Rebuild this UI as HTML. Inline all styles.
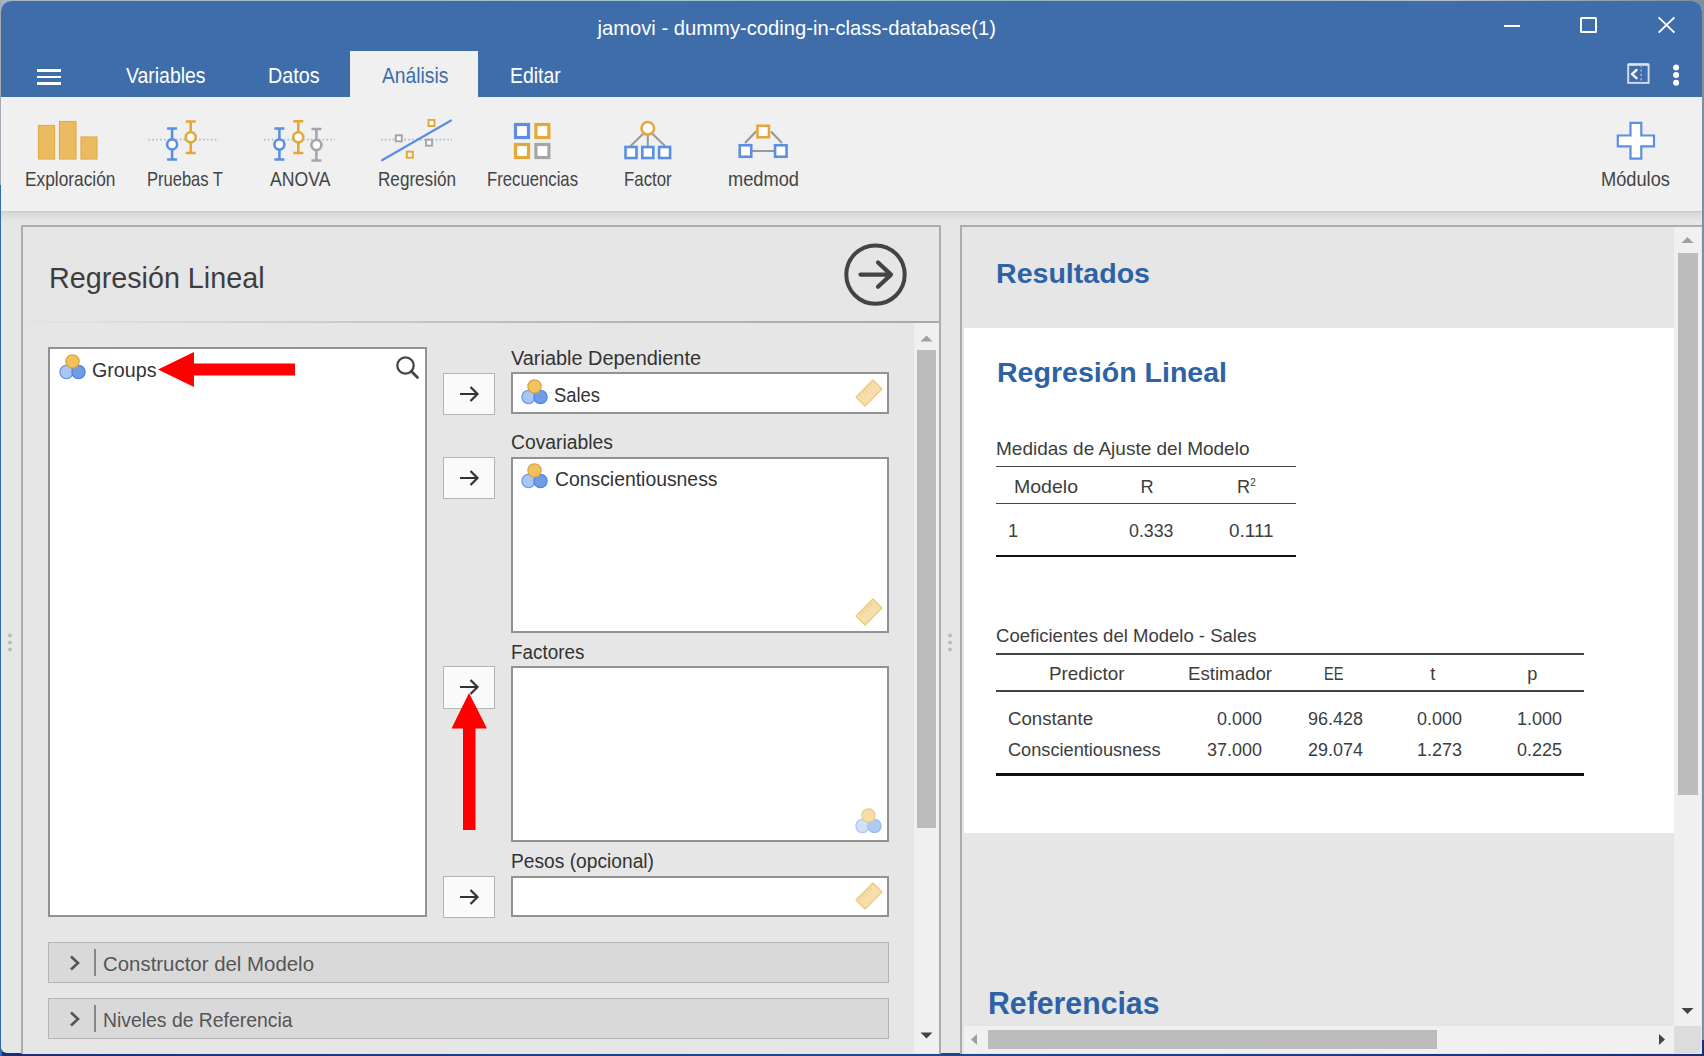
<!DOCTYPE html>
<html><head><meta charset="utf-8">
<style>
*{margin:0;padding:0;box-sizing:border-box}
html,body{width:1704px;height:1056px;overflow:hidden;background:#1d3b8a}
body{position:relative;font-family:"Liberation Sans",sans-serif;color:#333}
.a{position:absolute}
.t{position:absolute;white-space:nowrap;line-height:1}
svg{overflow:visible}
</style></head><body>
<div class="a" style="left:0px;top:0px;width:1704px;height:1056px;background:linear-gradient(90deg,#aab4be,#9cc8cc 40%,#8fb8c0 60%,#b4bec8 85%,#7e8e9e);"></div>
<div class="a" style="left:0px;top:1040px;width:1704px;height:16px;background:linear-gradient(90deg,#1a2d78,#22489a 50%,#1a2d78);"></div>
<div class="a" style="left:0px;top:0px;width:1.5px;height:185px;background:#a3acb5;"></div>
<div class="a" style="left:0px;top:185px;width:1.5px;height:871px;background:#2f6db0;"></div>
<div class="a" style="left:1px;top:1px;width:1701px;height:1052px;background:#e6e6e6;border-radius:10px 10px 6px 6px;overflow:hidden"></div>
<div class="a" style="left:1px;top:1px;width:1701px;height:95.5px;background:#3e6daa;border-radius:10px 10px 0 0"></div>
<div class="t" style="left:597.5px;top:18.40px;font-size:20.2px;color:#fff;letter-spacing:0.005px;">jamovi - dummy-coding-in-class-database(1)</div>
<div class="a" style="left:1503.5px;top:24.5px;width:16.5px;height:2px;background:#fff;"></div>
<div class="a" style="left:1580.2px;top:16.8px;width:16.4px;height:16.2px;background:transparent;border:2px solid #fff;border-radius:1.5px"></div>
<svg class="a" style="left:1656px;top:15px" width="22" height="22"><path d="M2.6 2.4L18.4 17.6M18.4 2.4L2.6 17.6" stroke="#fff" stroke-width="2"/></svg>
<div class="a" style="left:37px;top:69px;width:24px;height:2.5px;background:#fff;"></div>
<div class="a" style="left:37px;top:75.5px;width:24px;height:2.5px;background:#fff;"></div>
<div class="a" style="left:37px;top:82px;width:24px;height:2.5px;background:#fff;"></div>
<div class="t" style="left:126.3px;top:65.80px;font-size:21.5px;color:#fff;transform:scaleX(0.9030);transform-origin:0 0;">Variables</div>
<div class="t" style="left:268.3px;top:65.80px;font-size:21.5px;color:#fff;transform:scaleX(0.9169);transform-origin:0 0;">Datos</div>
<div class="a" style="left:350px;top:51px;width:128px;height:47px;background:#f0f0f0;"></div>
<div class="t" style="left:381.8px;top:65.80px;font-size:21.5px;color:#3e6daa;transform:scaleX(0.8963);transform-origin:0 0;">Análisis</div>
<div class="t" style="left:510.2px;top:65.80px;font-size:21.5px;color:#fff;transform:scaleX(0.9027);transform-origin:0 0;">Editar</div>
<div class="a" style="left:1px;top:96.5px;width:1701px;height:114.5px;background:#f0f0f0;"></div>
<div class="a" style="left:1px;top:210.5px;width:1701px;height:10px;background:linear-gradient(#c9c9c9,#d9d9d9 20%,#e6e6e6);"></div>
<svg class="a" style="left:0;top:0" width="1704" height="220"><rect x="38.5" y="125.5" width="16" height="33.5" fill="#ebbb62" stroke="#e3ac48" stroke-width="1.2"/><rect x="59.5" y="121.5" width="16.5" height="37.5" fill="#ebbb62" stroke="#e3ac48" stroke-width="1.2"/><rect x="81" y="137" width="16" height="22" fill="#ebbb62" stroke="#e3ac48" stroke-width="1.2"/><path d="M148.5 139.6H219" stroke="#a9b9d0" stroke-width="1.6" stroke-dasharray="1.6 2.3"/><path d="M167.1 128.5H177.1M172.1 128.5V159.5M167.1 159.5H177.1" stroke="#5b8fe3" stroke-width="2.6" fill="none"/><circle cx="172.1" cy="144.4" r="5" fill="#fff" stroke="#5b8fe3" stroke-width="2.6"/><path d="M185.7 121.5H195.7M190.7 121.5V153M185.7 153H195.7" stroke="#e6a73a" stroke-width="2.6" fill="none"/><circle cx="190.7" cy="137.3" r="5" fill="#fff" stroke="#e6a73a" stroke-width="2.6"/><path d="M264 139.6H335" stroke="#a9b9d0" stroke-width="1.6" stroke-dasharray="1.6 2.3"/><path d="M274.4 128.5H284.4M279.4 128.5V159.5M274.4 159.5H284.4" stroke="#5b8fe3" stroke-width="2.6" fill="none"/><circle cx="279.4" cy="144.5" r="5" fill="#fff" stroke="#5b8fe3" stroke-width="2.6"/><path d="M293.3 121.3H303.3M298.3 121.3V153M293.3 153H303.3" stroke="#e6a73a" stroke-width="2.6" fill="none"/><circle cx="298.3" cy="137.3" r="5" fill="#fff" stroke="#e6a73a" stroke-width="2.6"/><path d="M311.4 129H321.4M316.4 129V160.5M311.4 160.5H321.4" stroke="#a6a6a6" stroke-width="2.6" fill="none"/><circle cx="316.4" cy="145" r="5" fill="#fff" stroke="#a6a6a6" stroke-width="2.6"/><path d="M381 139.6H452" stroke="#a9b9d0" stroke-width="1.6" stroke-dasharray="1.6 2.3"/><path d="M382 160.3L451 120.5" stroke="#5b8fe3" stroke-width="2.2" stroke-linecap="round"/><rect x="395.8" y="135.3" width="6" height="6" fill="#fff" stroke="#a6a6a6" stroke-width="2"/><rect x="428.5" y="120.0" width="6" height="6" fill="#fff" stroke="#e6a73a" stroke-width="2"/><rect x="406.8" y="151.7" width="6" height="6" fill="#fff" stroke="#e6a73a" stroke-width="2"/><rect x="426.1" y="139.7" width="6" height="6" fill="#fff" stroke="#a6a6a6" stroke-width="2"/><rect x="515.5" y="124.5" width="13" height="13" fill="#fff" stroke="#5b8fe3" stroke-width="3.2"/><rect x="535.9" y="124.5" width="13" height="13" fill="#fff" stroke="#e6a73a" stroke-width="3.2"/><rect x="515.5" y="144.5" width="13" height="13" fill="#fff" stroke="#e6a73a" stroke-width="3.2"/><rect x="535.9" y="144.5" width="13" height="13" fill="#fff" stroke="#a6a6a6" stroke-width="3.2"/><path d="M630.5 146L644.5 132.5M647.8 130V146M651 132.5L665 146" stroke="#999" stroke-width="2"/><circle cx="647.8" cy="128.3" r="6.3" fill="#fff" stroke="#e6a73a" stroke-width="2.6"/><rect x="625.5" y="147.0" width="11" height="11" fill="#fff" stroke="#5b8fe3" stroke-width="2.6"/><rect x="642.3" y="147.0" width="11" height="11" fill="#fff" stroke="#5b8fe3" stroke-width="2.6"/><rect x="659.1" y="147.0" width="11" height="11" fill="#fff" stroke="#5b8fe3" stroke-width="2.6"/><path d="M745 143L756 131.5M771 131.5L782 143M745 151H782" stroke="#999" stroke-width="2.2"/><rect x="757.45" y="125.75" width="11.5" height="11.5" fill="#fff" stroke="#e6a73a" stroke-width="2.6"/><rect x="739.75" y="145.25" width="11.5" height="11.5" fill="#fff" stroke="#5b8fe3" stroke-width="2.6"/><rect x="775.05" y="145.25" width="11.5" height="11.5" fill="#fff" stroke="#5b8fe3" stroke-width="2.6"/><path d="M1630.5 122.8H1641.3V135.5H1654V146.3H1641.3V158.6H1630.5V146.3H1617.8V135.5H1630.5Z" fill="#fff" stroke="#5b8fe3" stroke-width="2.2"/></svg>
<div class="t" style="left:24.5px;top:169.74px;font-size:19.8px;color:#444;transform:scaleX(0.8746);transform-origin:0 0;">Exploración</div>
<div class="t" style="left:147px;top:169.74px;font-size:19.8px;color:#444;transform:scaleX(0.8350);transform-origin:0 0;">Pruebas T</div>
<div class="t" style="left:270px;top:169.74px;font-size:19.8px;color:#444;transform:scaleX(0.8911);transform-origin:0 0;">ANOVA</div>
<div class="t" style="left:377.5px;top:169.74px;font-size:19.8px;color:#444;transform:scaleX(0.8651);transform-origin:0 0;">Regresión</div>
<div class="t" style="left:486.5px;top:169.74px;font-size:19.8px;color:#444;transform:scaleX(0.8446);transform-origin:0 0;">Frecuencias</div>
<div class="t" style="left:624px;top:169.74px;font-size:19.8px;color:#444;transform:scaleX(0.8509);transform-origin:0 0;">Factor</div>
<div class="t" style="left:727.8px;top:169.74px;font-size:19.8px;color:#444;transform:scaleX(0.9225);transform-origin:0 0;">medmod</div>
<div class="t" style="left:1601.3px;top:169.74px;font-size:19.8px;color:#444;transform:scaleX(0.9215);transform-origin:0 0;">Módulos</div>
<svg class="a" style="left:1620px;top:56px" width="70" height="36"><rect x="8.2" y="8.6" width="20.4" height="18.3" fill="none" stroke="#d4deec" stroke-width="1.9"/><path d="M8.2 8.4H28.6" stroke="#dde5f0" stroke-width="2.4"/><path d="M21.2 9V27" stroke="#9fb6d6" stroke-width="1.6" stroke-dasharray="2.2 2.2"/><path d="M16.5 14L12 18.1L16.5 22.2" fill="none" stroke="#f4f6fa" stroke-width="2.5" stroke-linecap="round" stroke-linejoin="round"/><circle cx="56.1" cy="11.5" r="3" fill="#fff"/><circle cx="56.1" cy="19.1" r="3" fill="#fff"/><circle cx="56.1" cy="26.7" r="3" fill="#fff"/></svg>
<div class="a" style="left:21px;top:225px;width:920px;height:828.5px;background:#e6e6e6;border:2px solid #acacac;border-bottom:none"></div>
<div class="t" style="left:49.3px;top:262.97px;font-size:29.8px;color:#3e3e3e;transform:scaleX(0.9637);transform-origin:0 0;">Regresión Lineal</div>
<svg class="a" style="left:840px;top:240px" width="72" height="72"><circle cx="35.5" cy="34.6" r="29.2" fill="none" stroke="#444" stroke-width="4"/><path d="M20.5 34.6H51M38 22.5L51 34.6L38 46.8" fill="none" stroke="#444" stroke-width="4.2" stroke-linecap="round" stroke-linejoin="round"/></svg>
<div class="a" style="left:23px;top:321px;width:916px;height:2px;background:linear-gradient(90deg,#e4e4e4,#d2d2d2 25%,#b8b8b8 60%,#a8a8a8);"></div>
<div class="a" style="left:914px;top:323px;width:25px;height:730px;background:#f0f0f0;"></div>
<svg class="a" style="left:914px;top:330px" width="25" height="14"><path d="M6.5 11.5L12.5 5.5L18.5 11.5Z" fill="#a0a0a0"/></svg>
<div class="a" style="left:916.5px;top:350px;width:19.5px;height:478px;background:#bcbcbc;"></div>
<svg class="a" style="left:914px;top:1028px" width="25" height="14"><path d="M6.5 4.5L12.5 10.5L18.5 4.5Z" fill="#444"/></svg>
<div class="a" style="left:48px;top:347px;width:379px;height:570px;background:#fff;border:2px solid #929292"></div>
<svg class="a" style="left:60px;top:354px;opacity:1" width="26" height="28"><circle cx="6.5" cy="18" r="6.6" fill="#a9c7f2" stroke="#6c9be6" stroke-width="1.3"/><circle cx="18.5" cy="18" r="6.6" fill="#6f9de8" stroke="#4f86e0" stroke-width="1.3"/><circle cx="12.5" cy="7.5" r="6.6" fill="#f1c35f" stroke="#dca43a" stroke-width="1.3"/></svg>
<div class="t" style="left:92px;top:361.08px;font-size:19.4px;color:#333;transform:scaleX(1.0143);transform-origin:0 0;">Groups</div>
<svg class="a" style="left:392.5px;top:353px" width="28" height="28"><circle cx="12.5" cy="12.5" r="8.2" fill="none" stroke="#444" stroke-width="2.3"/><path d="M18.3 18.3L24.5 24.5" stroke="#444" stroke-width="2.8" stroke-linecap="round"/></svg>
<div class="a" style="left:442.8px;top:372.5px;width:52.2px;height:42.5px;background:#fafafa;border:1.8px solid #b4b4b4"></div>
<svg class="a" style="left:455px;top:382.5px" width="28" height="22"><path d="M5 11H22.5M15.5 4L22.5 11L15.5 18" fill="none" stroke="#333" stroke-width="2.2"/></svg>
<div class="a" style="left:442.8px;top:456.5px;width:52.2px;height:42.5px;background:#fafafa;border:1.8px solid #b4b4b4"></div>
<svg class="a" style="left:455px;top:466.5px" width="28" height="22"><path d="M5 11H22.5M15.5 4L22.5 11L15.5 18" fill="none" stroke="#333" stroke-width="2.2"/></svg>
<div class="a" style="left:442.8px;top:666px;width:52.2px;height:42.5px;background:#fafafa;border:1.8px solid #b4b4b4"></div>
<svg class="a" style="left:455px;top:676px" width="28" height="22"><path d="M5 11H22.5M15.5 4L22.5 11L15.5 18" fill="none" stroke="#333" stroke-width="2.2"/></svg>
<div class="a" style="left:442.8px;top:875.5px;width:52.2px;height:42.5px;background:#fafafa;border:1.8px solid #b4b4b4"></div>
<svg class="a" style="left:455px;top:885.5px" width="28" height="22"><path d="M5 11H22.5M15.5 4L22.5 11L15.5 18" fill="none" stroke="#333" stroke-width="2.2"/></svg>
<div class="t" style="left:510.5px;top:349.19px;font-size:19.5px;color:#333;transform:scaleX(1.0209);transform-origin:0 0;">Variable Dependiente</div>
<div class="a" style="left:511px;top:372px;width:378px;height:42px;background:#fff;border:2px solid #929292"></div>
<svg class="a" style="left:522px;top:379px;opacity:1" width="26" height="28"><circle cx="6.5" cy="18" r="6.6" fill="#a9c7f2" stroke="#6c9be6" stroke-width="1.3"/><circle cx="18.5" cy="18" r="6.6" fill="#6f9de8" stroke="#4f86e0" stroke-width="1.3"/><circle cx="12.5" cy="7.5" r="6.6" fill="#f1c35f" stroke="#dca43a" stroke-width="1.3"/></svg>
<div class="t" style="left:554.3px;top:385.72px;font-size:19.7px;color:#333;transform:scaleX(0.9341);transform-origin:0 0;">Sales</div>
<svg class="a" style="left:853px;top:377px" width="32" height="32"><g transform="rotate(-45 16 16)"><rect x="4" y="9.6" width="24" height="12.8" fill="#f7dfad" stroke="#eec97e" stroke-width="1.3"/><path d="M8.5 9.6V14M12 9.6V14M15.5 9.6V14.6M19 9.6V14M22.5 9.6V14" stroke="#e8c77e" stroke-width="0.9"/></g></svg>
<div class="t" style="left:510.5px;top:433.49px;font-size:19.5px;color:#333;transform:scaleX(0.9906);transform-origin:0 0;">Covariables</div>
<div class="a" style="left:511px;top:456.5px;width:378px;height:176px;background:#fff;border:2px solid #929292"></div>
<svg class="a" style="left:522px;top:463px;opacity:1" width="26" height="28"><circle cx="6.5" cy="18" r="6.6" fill="#a9c7f2" stroke="#6c9be6" stroke-width="1.3"/><circle cx="18.5" cy="18" r="6.6" fill="#6f9de8" stroke="#4f86e0" stroke-width="1.3"/><circle cx="12.5" cy="7.5" r="6.6" fill="#f1c35f" stroke="#dca43a" stroke-width="1.3"/></svg>
<div class="t" style="left:554.5px;top:470.09px;font-size:19.5px;color:#333;transform:scaleX(0.9928);transform-origin:0 0;">Conscientiousness</div>
<svg class="a" style="left:853px;top:596px" width="32" height="32"><g transform="rotate(-45 16 16)"><rect x="4" y="9.6" width="24" height="12.8" fill="#f7dfad" stroke="#eec97e" stroke-width="1.3"/><path d="M8.5 9.6V14M12 9.6V14M15.5 9.6V14.6M19 9.6V14M22.5 9.6V14" stroke="#e8c77e" stroke-width="0.9"/></g></svg>
<div class="t" style="left:510.8px;top:643.09px;font-size:19.5px;color:#333;transform:scaleX(0.9663);transform-origin:0 0;">Factores</div>
<div class="a" style="left:511px;top:665.5px;width:378px;height:176px;background:#fff;border:2px solid #929292"></div>
<svg class="a" style="left:856px;top:808px;opacity:0.55" width="26" height="28"><circle cx="6.5" cy="18" r="6.6" fill="#a9c7f2" stroke="#6c9be6" stroke-width="1.3"/><circle cx="18.5" cy="18" r="6.6" fill="#6f9de8" stroke="#4f86e0" stroke-width="1.3"/><circle cx="12.5" cy="7.5" r="6.6" fill="#f1c35f" stroke="#dca43a" stroke-width="1.3"/></svg>
<div class="t" style="left:510.8px;top:852.49px;font-size:19.5px;color:#333;transform:scaleX(0.9846);transform-origin:0 0;">Pesos (opcional)</div>
<div class="a" style="left:511px;top:875.5px;width:378px;height:41.5px;background:#fff;border:2px solid #929292"></div>
<svg class="a" style="left:853px;top:880px" width="32" height="32"><g transform="rotate(-45 16 16)"><rect x="4" y="9.6" width="24" height="12.8" fill="#f7dfad" stroke="#eec97e" stroke-width="1.3"/><path d="M8.5 9.6V14M12 9.6V14M15.5 9.6V14.6M19 9.6V14M22.5 9.6V14" stroke="#e8c77e" stroke-width="0.9"/></g></svg>
<div class="a" style="left:48px;top:942px;width:841px;height:41px;background:#d9d9d9;border:1.5px solid #b4b4b4"></div>
<svg class="a" style="left:64px;top:952px" width="20" height="22"><path d="M7 4.5L14 11L7 17.5" fill="none" stroke="#555" stroke-width="2.6"/></svg>
<div class="a" style="left:94px;top:949px;width:1.5px;height:27px;background:#888;"></div>
<div class="t" style="left:103px;top:954.12px;font-size:20.3px;color:#555;transform:scaleX(1.0063);transform-origin:0 0;">Constructor del Modelo</div>
<div class="a" style="left:48px;top:998px;width:841px;height:41px;background:#d9d9d9;border:1.5px solid #b4b4b4"></div>
<svg class="a" style="left:64px;top:1008px" width="20" height="22"><path d="M7 4.5L14 11L7 17.5" fill="none" stroke="#555" stroke-width="2.6"/></svg>
<div class="a" style="left:94px;top:1005px;width:1.5px;height:27px;background:#888;"></div>
<div class="t" style="left:103px;top:1010.12px;font-size:20.3px;color:#555;transform:scaleX(0.9551);transform-origin:0 0;">Niveles de Referencia</div>
<svg class="a" style="left:150px;top:345px" width="150" height="48"><path d="M8 24.5L44 7V18.5H145V30.5H44V42Z" fill="#ff0000"/></svg>
<svg class="a" style="left:445px;top:688px" width="48" height="145"><path d="M24 5L42 40.5H30.5V142H18V40.5H6.5Z" fill="#ff0000"/></svg>
<div class="a" style="left:960px;top:225px;width:742px;height:828.5px;background:#e6e6e6;border-left:2px solid #acacac;border-top:2px solid #acacac"></div>
<div class="a" style="left:964px;top:327.5px;width:710px;height:505.5px;background:#fff;"></div>
<div class="t" style="left:995.5px;top:259.26px;font-size:28.4px;color:#2e62a6;font-weight:700;transform:scaleX(1.0063);transform-origin:0 0;">Resultados</div>
<div class="t" style="left:996.5px;top:357.86px;font-size:28.4px;color:#2e62a6;font-weight:700;transform:scaleX(1.0054);transform-origin:0 0;">Regresión Lineal</div>
<div class="t" style="left:995.5px;top:440.73px;font-size:17.8px;color:#3d3d3d;transform:scaleX(1.0684);transform-origin:0 0;">Medidas de Ajuste del Modelo</div>
<div class="a" style="left:996px;top:465.5px;width:300px;height:1.5px;background:#444;"></div>
<div class="t" style="left:1014px;top:477.59px;font-size:18.2px;color:#3d3d3d;transform:scaleX(1.0729);transform-origin:0 0;">Modelo</div>
<div class="t" style="left:1140.5px;top:477.59px;font-size:18.2px;color:#3d3d3d;">R</div>
<div class="t" style="left:1237px;top:477.59px;font-size:18.2px;color:#3d3d3d;">R<sup style="font-size:10px;vertical-align:7px">2</sup></div>
<div class="a" style="left:996px;top:502.8px;width:300px;height:1.5px;background:#444;"></div>
<div class="t" style="left:1008px;top:522.01px;font-size:18.3px;color:#3d3d3d;">1</div>
<div class="t" style="left:1129px;top:522.01px;font-size:18.3px;color:#3d3d3d;transform:scaleX(0.9727);transform-origin:0 0;">0.333</div>
<div class="t" style="left:1228.5px;top:522.01px;font-size:18.3px;color:#3d3d3d;transform:scaleX(1.0341);transform-origin:0 0;">0.111</div>
<div class="a" style="left:996px;top:554.5px;width:300px;height:2.8px;background:#111;"></div>
<div class="t" style="left:995.5px;top:628.13px;font-size:17.8px;color:#3d3d3d;transform:scaleX(1.0418);transform-origin:0 0;">Coeficientes del Modelo - Sales</div>
<div class="a" style="left:996px;top:653.2px;width:588px;height:1.5px;background:#444;"></div>
<div class="t" style="left:1048.5px;top:665.39px;font-size:18.2px;color:#3d3d3d;transform:scaleX(1.0374);transform-origin:0 0;">Predictor</div>
<div class="t" style="left:1187.8px;top:665.39px;font-size:18.2px;color:#3d3d3d;transform:scaleX(1.0260);transform-origin:0 0;">Estimador</div>
<div class="t" style="left:1324px;top:665.39px;font-size:18.2px;color:#3d3d3d;transform:scaleX(0.8037);transform-origin:0 0;">EE</div>
<div class="t" style="left:1430.3px;top:665.39px;font-size:18.2px;color:#3d3d3d;">t</div>
<div class="t" style="left:1527.3px;top:665.39px;font-size:18.2px;color:#3d3d3d;">p</div>
<div class="a" style="left:996px;top:690.3px;width:588px;height:1.5px;background:#444;"></div>
<div class="t" style="left:1007.5px;top:709.81px;font-size:18.3px;color:#3d3d3d;transform:scaleX(1.0200);transform-origin:0 0;">Constante</div>
<div class="t" style="left:1007.5px;top:741.31px;font-size:18.3px;color:#3d3d3d;transform:scaleX(0.9938);transform-origin:0 0;">Conscientiousness</div>
<div class="t" style="left:1217.1px;top:709.81px;font-size:18.3px;color:#3d3d3d;transform:scaleX(0.9837);transform-origin:0 0;">0.000</div>
<div class="t" style="left:1207.1px;top:741.31px;font-size:18.3px;color:#3d3d3d;transform:scaleX(0.9836);transform-origin:0 0;">37.000</div>
<div class="t" style="left:1308.3px;top:709.81px;font-size:18.3px;color:#3d3d3d;transform:scaleX(0.9836);transform-origin:0 0;">96.428</div>
<div class="t" style="left:1308.3px;top:741.31px;font-size:18.3px;color:#3d3d3d;transform:scaleX(0.9836);transform-origin:0 0;">29.074</div>
<div class="t" style="left:1416.9px;top:709.81px;font-size:18.3px;color:#3d3d3d;transform:scaleX(0.9837);transform-origin:0 0;">0.000</div>
<div class="t" style="left:1416.9px;top:741.31px;font-size:18.3px;color:#3d3d3d;transform:scaleX(0.9837);transform-origin:0 0;">1.273</div>
<div class="t" style="left:1516.8px;top:709.81px;font-size:18.3px;color:#3d3d3d;transform:scaleX(0.9837);transform-origin:0 0;">1.000</div>
<div class="t" style="left:1516.8px;top:741.31px;font-size:18.3px;color:#3d3d3d;transform:scaleX(0.9837);transform-origin:0 0;">0.225</div>
<div class="a" style="left:996px;top:773.2px;width:588px;height:2.8px;background:#111;"></div>
<div class="t" style="left:988px;top:989.23px;font-size:30.8px;color:#2e62a6;font-weight:700;transform:scaleX(0.9822);transform-origin:0 0;">Referencias</div>
<div class="a" style="left:1674px;top:227px;width:27px;height:799px;background:#f0f0f0;"></div>
<svg class="a" style="left:1674px;top:232px" width="27" height="14"><path d="M7.5 11L13.5 5L19.5 11Z" fill="#a0a0a0"/></svg>
<div class="a" style="left:1677.5px;top:253px;width:20.5px;height:542px;background:#bcbcbc;"></div>
<svg class="a" style="left:1674px;top:1004px" width="27" height="14"><path d="M7.5 4L13.5 10L19.5 4Z" fill="#444"/></svg>
<div class="a" style="left:964px;top:1026px;width:710px;height:27px;background:#f0f0f0;"></div>
<svg class="a" style="left:966px;top:1032px" width="14" height="16"><path d="M11 2L5 7.5L11 13Z" fill="#a0a0a0"/></svg>
<div class="a" style="left:988px;top:1029.5px;width:449px;height:19.5px;background:#bcbcbc;"></div>
<svg class="a" style="left:1656px;top:1032px" width="14" height="16"><path d="M3 2L9 7.5L3 13Z" fill="#444"/></svg>
<div class="a" style="left:1674px;top:1026px;width:27px;height:27px;background:#dcdcdc;border-radius:0 0 6px 0"></div>
<svg class="a" style="left:6px;top:632px" width="10" height="24"><circle cx="4" cy="3.5" r="2" fill="#bbb"/><circle cx="4" cy="10.5" r="2" fill="#bbb"/><circle cx="4" cy="17.5" r="2" fill="#bbb"/></svg>
<svg class="a" style="left:946px;top:632px" width="10" height="24"><circle cx="4" cy="3.5" r="2" fill="#bbb"/><circle cx="4" cy="10.5" r="2" fill="#bbb"/><circle cx="4" cy="17.5" r="2" fill="#bbb"/></svg>
</body></html>
